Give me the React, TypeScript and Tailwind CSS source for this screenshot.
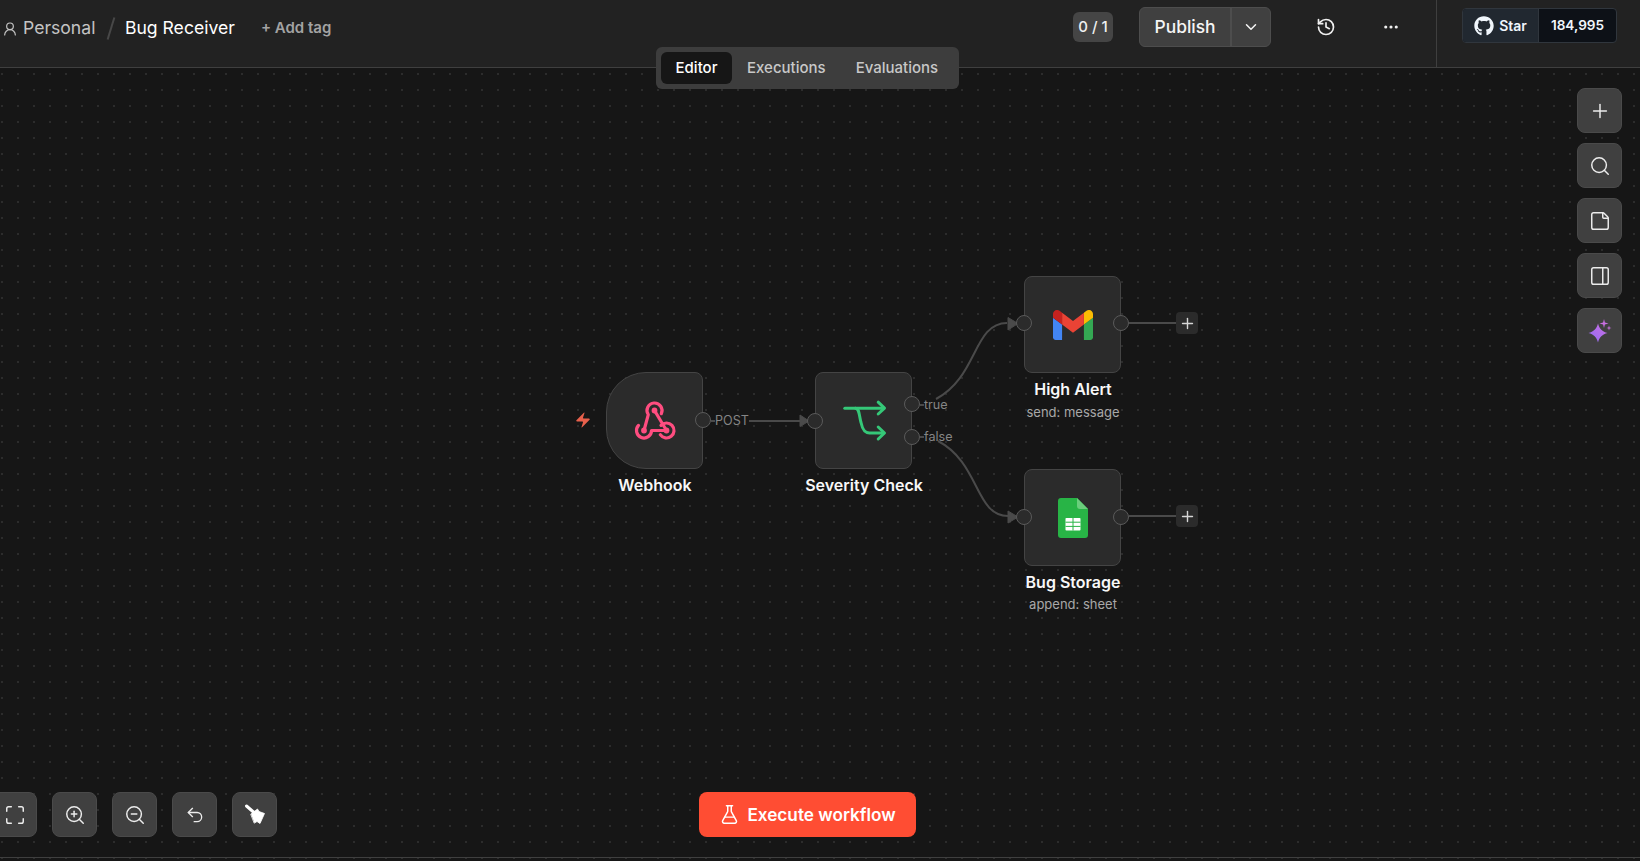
import React from "react";
import { UserRound, ChevronDown, History, Ellipsis, Plus, Search, StickyNote, PanelRight, Maximize, ZoomIn, ZoomOut, Undo2, FlaskConical, Zap } from "lucide-react";
import { FaGithub } from "react-icons/fa";

function ToolButton({ children }: { children: React.ReactNode }) {
  return (
    <button className="flex h-[45px] w-[45px] shrink-0 items-center justify-center rounded-lg border border-[#4a4a4a] bg-[#404040] text-[#ececec]">
      {children}
    </button>
  );
}

function WebhookIcon() {
  return (
    <svg width="60" height="50" viewBox="-0.5 0.5 60 50" fill="none" stroke="#ff4d80" strokeWidth="3.2" strokeLinecap="round" strokeLinejoin="round">
      <path d="M18.5 35 L22.8 19.2 A7.5 7.5 0 1 1 35.8 18.2" />
      <path d="M29 15 L41 35" />
      <path d="M41 35 H26 A7.5 7.5 0 1 1 13 29.9" />
      <path d="M35.5 29.9 A7.5 7.5 0 1 1 34.8 39.2" />
      <circle cx="29" cy="15" r="1.3" fill="#ff4d80" />
      <circle cx="18.5" cy="35" r="1.3" fill="#ff4d80" />
      <circle cx="41" cy="35" r="1.3" fill="#ff4d80" />
    </svg>
  );
}

function IfIcon() {
  return (
    <svg width="60" height="50" viewBox="-1.5 0.5 60 50" fill="none" stroke="#35c878" strokeWidth="3" strokeLinecap="round" strokeLinejoin="round">
      <path d="M9.3 12.7 H48" />
      <path d="M42.7 6.7 L49 12.7 L42.7 18.5" />
      <path d="M20 12.7 C24 13 23.5 20 25.5 27 C27 34 29 37.5 34 37.5 H48" />
      <path d="M42.7 31.5 L49 37.5 L42.7 43.5" />
    </svg>
  );
}

function GmailIcon() {
  return (
    <svg width="40" height="30" viewBox="52 42 88 66">
      <path fill="#4285f4" d="M58 108h14V74L52 59v43c0 3.32 2.69 6 6 6" />
      <path fill="#34a853" d="M120 108h14c3.32 0 6-2.69 6-6V59l-20 15" />
      <path fill="#fbbc04" d="M120 48v26l20-15v-8c0-7.42-8.47-11.65-14.4-7.2" />
      <path fill="#ea4335" d="M72 74V48l24 18 24-18v26L96 92" />
      <path fill="#c5221f" d="M52 51v8l20 15V48l-5.6-4.2c-5.94-4.45-14.4-.22-14.4 7.2" />
    </svg>
  );
}

function SheetsIcon() {
  return (
    <svg width="30" height="40" viewBox="0 0 30 40">
      <path fill="#28b446" d="M3 0 H19 L30 11 V37 a3 3 0 0 1 -3 3 H3 a3 3 0 0 1 -3 -3 V3 a3 3 0 0 1 3 -3z" />
      <path fill="#6ace7c" d="M19 0 L30 11 H22 a3 3 0 0 1 -3 -3z" />
      <rect x="7.5" y="20" width="15" height="12.5" rx="0.8" fill="#ffffff" />
      <path stroke="#28b446" strokeWidth="1" d="M15 20 V32.5 M7.5 24.2 H22.5 M7.5 28.4 H22.5" />
    </svg>
  );
}

function SparkIcon() {
  return (
    <svg width="24" height="24" viewBox="0 0 24 24">
      <defs>
        <linearGradient id="spark" x1="0" y1="1" x2="1" y2="0">
          <stop offset="0" stopColor="#8f6cf7" />
          <stop offset="1" stopColor="#cc6fe0" />
        </linearGradient>
      </defs>
      <path fill="url(#spark)" d="M10 4.5 C11.2 9.5 14.5 12.8 19.5 14 C14.5 15.2 11.2 18.5 10 23.5 C8.8 18.5 5.5 15.2 0.5 14 C5.5 12.8 8.8 9.5 10 4.5z" />
      <path fill="#c86fe0" d="M16 0 L16.9 3.6 L20.5 4.5 L16.9 5.4 L16 9 L15.1 5.4 L11.5 4.5 L15.1 3.6z" />
      <path fill="#c86fe0" d="M21 6.5 L21.6 8.4 L23.5 9 L21.6 9.6 L21 11.5 L20.4 9.6 L18.5 9 L20.4 8.4z" />
    </svg>
  );
}

function BroomIcon() {
  return (
    <svg width="24" height="24" viewBox="0 0 24 24" fill="#ffffff" stroke="#ffffff" strokeLinecap="round" strokeLinejoin="round">
      <path d="M3.5 3 L11 9.5" strokeWidth="3" fill="none" />
      <path d="M8 11 L14.5 6 L16 8.5 L21.5 10.5 L17 20.5 L14 18.5 L11.5 20z" strokeWidth="0.8" />
    </svg>
  );
}

function Handle({ className }: { className: string }) {
  return <div className={`absolute h-[16px] w-[16px] rounded-full border border-[#5a5a5a] bg-[#2b2b2b] ${className}`} />;
}

function AddButton({ className }: { className: string }) {
  return (
    <div className={`absolute flex h-[22px] w-[22px] items-center justify-center rounded bg-[#2b2b2b] text-[#d6d6d6] ${className}`}>
      <Plus size={17} strokeWidth={2} />
    </div>
  );
}

function NodeLabel({ className, title, sub, subClass }: { className: string; title: string; sub?: string; subClass?: string }) {
  return (
    <div className={`absolute flex w-[200px] flex-col items-center ${className}`}>
      <div className="text-[16px] leading-[20px] font-semibold text-[#f8f8f8]">{title}</div>
      {sub && <div className={`text-[13px] leading-[18px] text-[#a8a8a8] ${subClass}`}>{sub}</div>}
    </div>
  );
}

export default function App() {
  return (
    <div className="flex h-[861px] w-[1640px] flex-col overflow-hidden bg-[#161616] font-['Inter',sans-serif]">
      <header className="flex h-[68px] shrink-0 items-start border-b border-[#3f3f3f] bg-[#222222]">
        <div className="flex h-[57px] items-center">
          <UserRound size={16} strokeWidth={1.8} className="ml-[2px] text-[#c4c4c4]" />
          <span className="ml-[5px] text-[17.6px] text-[#c4c4c4]">Personal</span>
          <span className="ml-[15px] h-[23px] w-[1.5px] rotate-[17deg] bg-[#484848]" />
          <span className="ml-[13px] text-[17.6px] text-white">Bug Receiver</span>
          <span className="ml-[26px] text-[15px] font-semibold text-[#a3a3a3]">+ Add tag</span>
        </div>
        <div className="ml-auto flex self-stretch">
          <div className="flex h-[54px] items-center">
            <span className="flex h-[30px] w-[40px] items-center justify-center rounded-md bg-[#454545] text-[15px] font-medium text-[#f0f0f0]">0 / 1</span>
            <div className="ml-[26px] flex h-[40px] w-[132px] rounded-md border border-[#4d4d4d] bg-[#404040] text-[#f5f5f5]">
              <span className="flex w-[92px] items-center justify-center border-r-2 border-[#4d4d4d] text-[17.4px] font-medium">Publish</span>
              <span className="flex flex-1 items-center justify-center"><ChevronDown size={18} /></span>
            </div>
            <History size={20} strokeWidth={2} className="ml-[45px] text-[#f0f0f0]" />
            <Ellipsis size={18} strokeWidth={2.2} className="ml-[46px] text-[#f0f0f0]" />
          </div>
          <div className="ml-[36px] w-[204px] border-l border-[#3f3f3f] pl-[25px] pt-[8px]">
            <div className="flex h-[35px] w-[155px] overflow-hidden rounded border border-[#30363d] bg-[#0d1117] text-[14px] font-semibold text-[#f0f6fc]">
              <span className="flex w-[76px] items-center justify-center gap-[5px] border-r border-[#30363d] bg-[#212830]">
                <FaGithub size={20} />Star
              </span>
              <span className="flex flex-1 items-center justify-center text-[13.6px]">184,995</span>
            </div>
          </div>
        </div>
      </header>

      <main className="relative flex-1 bg-[radial-gradient(circle,#2c2c2c_0.8px,transparent_1px)] bg-[length:16px_16px] bg-[position:-6px_-2px]">
        <nav className="absolute -top-[21px] left-[656px] flex h-[42px] w-[303px] items-center rounded-md bg-[#3d3d3d] px-[5px] text-[15px] font-medium text-[#c8c8c8]">
          <span className="flex h-[32px] w-[71px] items-center justify-center rounded-md bg-[#161616] text-white">Editor</span>
          <span className="ml-[15px]">Executions</span>
          <span className="ml-[30px]">Evaluations</span>
        </nav>

        <div className="absolute left-[1577px] top-[20px] flex flex-col gap-[10px]">
          <ToolButton><Plus size={22} strokeWidth={1.6} /></ToolButton>
          <ToolButton><Search size={22} strokeWidth={1.6} /></ToolButton>
          <ToolButton><StickyNote size={22} strokeWidth={1.6} /></ToolButton>
          <ToolButton><PanelRight size={22} strokeWidth={1.6} /></ToolButton>
          <ToolButton><SparkIcon /></ToolButton>
        </div>

        <div className="absolute -left-[8px] top-[724px] flex gap-[15px]">
          <ToolButton><Maximize size={22} strokeWidth={1.6} /></ToolButton>
          <ToolButton><ZoomIn size={22} strokeWidth={1.6} /></ToolButton>
          <ToolButton><ZoomOut size={22} strokeWidth={1.6} /></ToolButton>
          <ToolButton><Undo2 size={20} strokeWidth={1.6} /></ToolButton>
          <ToolButton><BroomIcon /></ToolButton>
        </div>

        <button className="absolute left-[699px] top-[724px] flex h-[45px] w-[217px] items-center justify-center gap-[7px] rounded-lg bg-[#ff4d33] text-[17.2px] font-semibold text-white">
          <FlaskConical size={21} strokeWidth={1.7} />Execute workflow
        </button>

        <div className="absolute bottom-[3px] left-0 h-px w-full bg-[#3f3f3f]" />

        <svg className="absolute left-0 top-0" width="1640" height="793" fill="none" stroke="#4a4a4a" strokeWidth="2">
          <path d="M711 353 H715 M749 353 H801" />
          <path d="M800 347 L809 353 L800 358.5z" fill="#4a4a4a" strokeWidth="1" />
          <path d="M920 337 H924 M920 369 H924" />
          <path d="M936 331 C978 309 973 255 1007 255" />
          <path d="M938 373 C980 395 975 448 1008 448" />
          <path d="M1008 249.5 L1018 255.5 L1008 262z" fill="#4a4a4a" strokeWidth="1" />
          <path d="M1008 443 L1018 449 L1008 455z" fill="#4a4a4a" strokeWidth="1" />
          <path d="M1129 255 H1176" />
          <path d="M1129 448 H1176" />
        </svg>

        <Zap size={18} strokeWidth={0} fill="#e8604c" className="absolute left-[574px] top-[343px]" />

        <div className="absolute left-[606px] top-[304px] flex h-[97px] w-[97px] items-center justify-center rounded-l-[40px] rounded-r-lg border border-[#444444] bg-[#2b2b2b]"><WebhookIcon /></div>
        <Handle className="left-[695px] top-[344px]" />
        <span className="absolute left-[715px] top-[345px] text-[12.6px] leading-[16px] text-[#858585]">POST</span>
        <NodeLabel className="left-[555px] top-[407px]" title="Webhook" />

        <div className="absolute left-[815px] top-[304px] flex h-[97px] w-[97px] items-center justify-center rounded-lg border border-[#444444] bg-[#2b2b2b]"><IfIcon /></div>
        <Handle className="left-[807px] top-[345px]" />
        <Handle className="left-[904px] top-[328px]" />
        <Handle className="left-[904px] top-[361px]" />
        <span className="absolute left-[924px] top-[329px] text-[12.6px] leading-[16px] text-[#858585]">true</span>
        <span className="absolute left-[924px] top-[361px] text-[12.6px] leading-[16px] text-[#858585]">false</span>
        <NodeLabel className="left-[764px] top-[407px]" title="Severity Check" />

        <div className="absolute left-[1024px] top-[208px] flex h-[97px] w-[97px] items-center justify-center rounded-lg border border-[#444444] bg-[#2b2b2b]"><GmailIcon /></div>
        <Handle className="left-[1016px] top-[247px]" />
        <Handle className="left-[1113px] top-[247px]" />
        <AddButton className="left-[1176px] top-[244px]" />
        <NodeLabel className="left-[973px] top-[311px]" title="High Alert" sub="send: message" subClass="mt-[4px]" />

        <div className="absolute left-[1024px] top-[401px] flex h-[97px] w-[97px] items-center justify-center rounded-lg border border-[#444444] bg-[#2b2b2b]"><SheetsIcon /></div>
        <Handle className="left-[1016px] top-[441px]" />
        <Handle className="left-[1113px] top-[441px]" />
        <AddButton className="left-[1176px] top-[437px]" />
        <NodeLabel className="left-[973px] top-[504px]" title="Bug Storage" sub="append: sheet" subClass="mt-[3px]" />
      </main>
    </div>
  );
}
